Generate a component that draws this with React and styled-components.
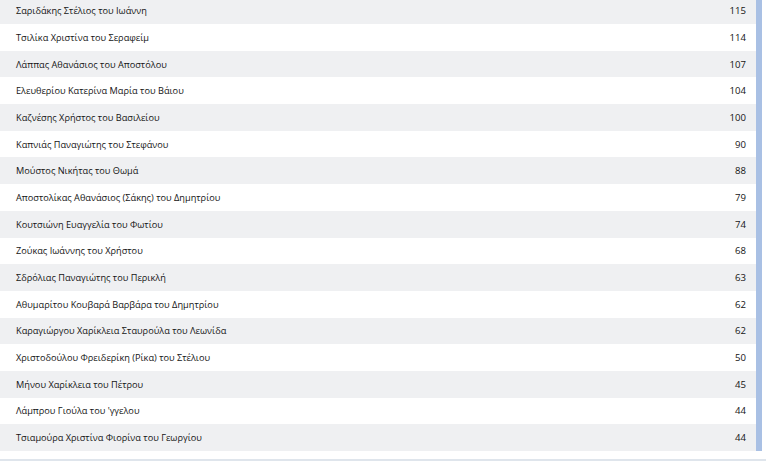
import React from 'react';
import styled, { createGlobalStyle } from 'styled-components';

const GlobalStyle = createGlobalStyle`
    html, body {
        margin: 0;
        padding: 0;
        background: #ffffff;
        overflow: hidden;
    }
    body {
        font-family: "Open Sans", "DejaVu Sans", sans-serif;
    }
`;

const Page = styled.div`
    width: 766px;
    height: 466px;
    display: flex;
    flex-direction: column;
    overflow: hidden;
`;

const Body = styled.div`
    display: flex;
    flex-direction: row;
    margin-top: -2.7px;
`;

const Table = styled.div`
    width: 756px;
    display: flex;
    flex-direction: column;
`;

const Row = styled.div`
    height: 26.7px;
    display: flex;
    flex-direction: row;
    align-items: center;
    justify-content: space-between;
    padding: 0 10px 0 16px;
    box-sizing: border-box;
    background: ${props => (props.$striped ? '#eff0f2' : '#ffffff')};
`;

const Name = styled.span`
    font-size: 9.2px;
    color: #141414;
    white-space: nowrap;
`;

const Count = styled.span`
    font-size: 9.6px;
    color: #141414;
`;

const ScrollStrip = styled.div`
    width: 6px;
    background: #a9c0e4;
`;

const Divider = styled.div`
    margin-top: 8px;
    height: 2px;
    background: #dfe5ec;
`;

const people = [
    ['Σαριδάκης Στέλιος του Ιωάννη', 115],
    ['Τσιλίκα Χριστίνα του Σεραφείμ', 114],
    ['Λάππας Αθανάσιος του Αποστόλου', 107],
    ['Ελευθερίου Κατερίνα Μαρία του Βάιου', 104],
    ['Καζνέσης Χρήστος του Βασιλείου', 100],
    ['Καπνιάς Παναγιώτης του Στεφάνου', 90],
    ['Μούστος Νικήτας του Θωμά', 88],
    ['Αποστολίκας Αθανάσιος (Σάκης) του Δημητρίου', 79],
    ['Κουτσιώνη Ευαγγελία του Φωτίου', 74],
    ['Ζούκας Ιωάννης του Χρήστου', 68],
    ['Σδρόλιας Παναγιώτης του Περικλή', 63],
    ['Αθυμαρίτου Κουβαρά Βαρβάρα του Δημητρίου', 62],
    ['Καραγιώργου Χαρίκλεια Σταυρούλα του Λεωνίδα', 62],
    ['Χριστοδούλου Φρειδερίκη (Ρίκα) του Στέλιου', 50],
    ['Μήνου Χαρίκλεια του Πέτρου', 45],
    ['Λάμπρου Γιούλα του \'γγελου', 44],
    ['Τσιαμούρα Χριστίνα Φιορίνα του Γεωργίου', 44],
];

function App() {
    return (
        <>
            <GlobalStyle />
            <Page>
                <Body>
                    <Table>
                        {people.map(([name, votes], i) => (
                            <Row key={name} $striped={i % 2 === 0}>
                                <Name>{name}</Name>
                                <Count>{votes}</Count>
                            </Row>
                        ))}
                    </Table>
                    <ScrollStrip />
                </Body>
                <Divider />
            </Page>
        </>
    );
}

export default App;
